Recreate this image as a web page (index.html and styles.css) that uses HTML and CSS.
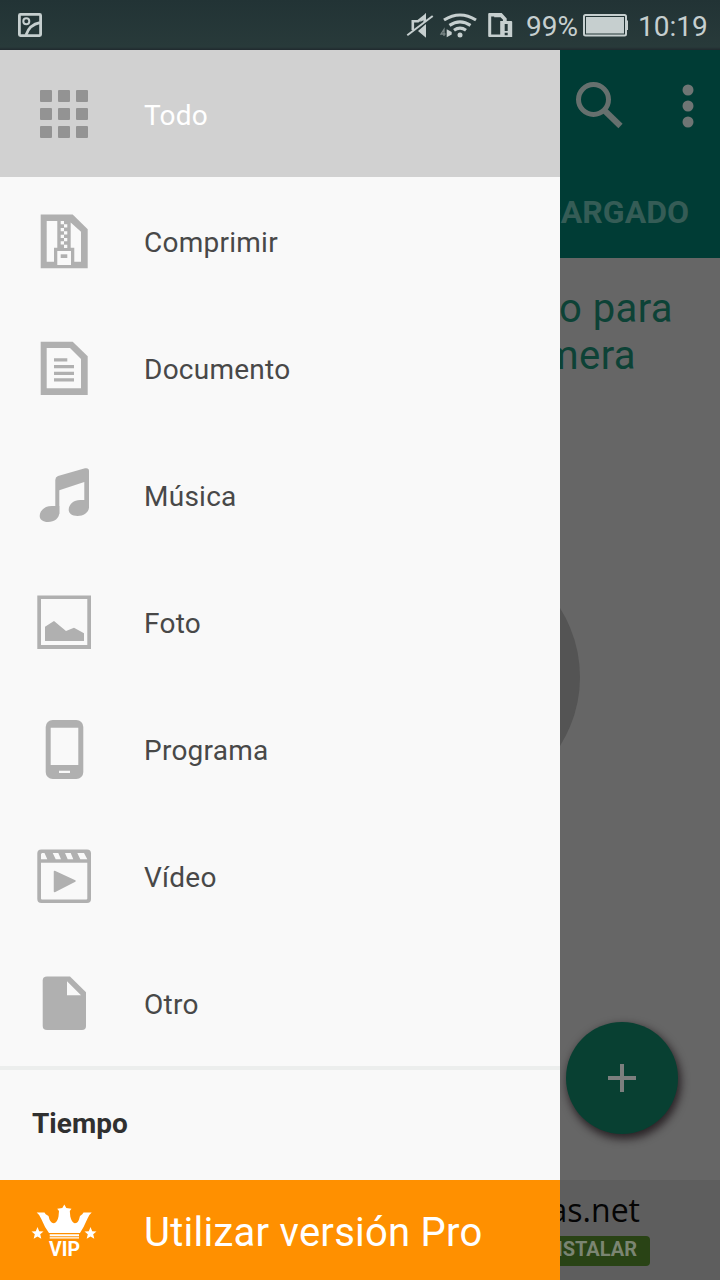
FILE: index.html
```html
<!DOCTYPE html>
<html lang="es">
<head>
<meta charset="utf-8">
<title>Descargas</title>
<link rel="stylesheet" href="styles.css">
</head>
<body>
<header class="status">
  <svg class="status-shot" width="24" height="24" viewBox="0 0 24 24" fill="none" stroke="#c6cfcf">
    <rect x="1.4" y="1.4" width="21.2" height="21.2" rx="1" stroke-width="2.8"/>
    <circle cx="8.3" cy="8.3" r="3" stroke-width="2"/>
    <path d="M8 22C10 16 15 11 22 9.700" stroke-width="2.8"/>
  </svg>
  <svg class="status-icons" width="108" height="32" viewBox="0 0 108 32">
    <g fill="none" stroke="#c6cfcf">
      <path d="M6.800 20V11.300H12L18.700 6V12" stroke-width="2.600"/>
      <path d="M1.300 25.300L26.700 6" stroke-width="2"/>
      <path d="M38 10Q54 0 70 10M43.500 15.300Q54 8.300 64.500 15.300M48 20.200Q54 16 60 20.200" stroke-width="3.200"/>
      <path d="M38 26V19.500L35 24H39.500" stroke="#7a8686" stroke-width="1.300"/>
    </g>
    <path d="M20 2.700V9L14 12ZM20 14V27.700L12 21ZM40.700 19.300L45.700 22V24.500L40.700 27.300Z" fill="#c6cfcf"/>
    <circle cx="54" cy="25" r="2.500" fill="#c6cfcf"/>
    <g transform="translate(1.200 -2)">
      <path d="M82 5H94.500L99.500 10.500V13H96.500V11L93 8.500H84V26.500H95V29H82Q81 29 81 28V6Q81 5 82 5Z" fill="#c6cfcf"/>
      <path d="M93 13H104Q105 13 105 14V29H93Z" fill="#c6cfcf"/>
      <path d="M87 8H94L97 11V13" fill="none" stroke="#c6cfcf" stroke-width="2.500"/>
      <path d="M97.500 16H100.500V23H97.500ZM97.500 24.800H100.500V27.300H97.500Z" fill="#26383a"/>
    </g>
  </svg>
  <span class="status-text percent">99%</span>
  <svg class="status-battery" width="46" height="24" viewBox="0 0 46 24">
    <rect x="1" y="2" width="42" height="20.500" rx="1.500" fill="none" stroke="#c6cfcf" stroke-width="2"/>
    <rect x="3" y="4" width="38" height="16.500" fill="#c6cfcf"/>
    <path d="M43 7.500H45V17H43Z" fill="#c6cfcf"/>
  </svg>
  <span class="status-text clock">10:19</span>
</header>
<div class="screen">
  <nav class="drawer">
    <a class="row selected">
      <svg class="icon" viewBox="0 0 64 64">
        <g stroke="#939393" stroke-width="2" stroke-linejoin="round"><path d="M9 10h10v10h-10zM27 10h10v10h-10zM45 10h10v10h-10zM9 28h10v10h-10zM27 28h10v10h-10zM45 28h10v10h-10zM9 46h10v10h-10zM27 46h10v10h-10zM45 46h10v10h-10z"/></g>
      </svg>
      <span>Todo</span>
    </a>
    <a class="row">
      <svg class="icon" viewBox="0 0 64 64">
        <path d="M8.700 6.500H40.700L55.700 21.300V60.300H8.700Z"/>
        <path class="cut" d="M14.700 13H25.300V39.700H22V53.700H14.700ZM38.700 14.500L49 23.700V53.700H42.300V39.700H38.700ZM25.300 43H39V57H25.300Z"/>
        <path class="cut" d="M28.700 13h3.300v3.300h-3.300zM32 16.300h3.300v3.300h-3.300zM28.700 20h3.300v3.300h-3.300zM32 23.300h3.300v3.300h-3.300zM28.700 26.700h3.300v3.300h-3.300zM32 30h3.300v3.300h-3.300zM28.700 33.300h3.300v3.300h-3.300zM32 36.700h3.300v3.300h-3.300z"/>
        <path d="M28.700 46.300H35.300V50H28.700Z"/>
      </svg>
      <span>Comprimir</span>
    </a>
    <a class="row">
      <svg class="icon" viewBox="0 0 64 64">
        <path d="M8.700 6.700H40.700L55.700 21.300V60H8.700Z"/>
        <path class="cut" d="M14.700 13H38L49 24V53.300H14.700Z"/>
        <path d="M22 23.300h13.300v3.300h-13.300zM22 30h20v3.300h-20zM22 36.700h20v3.300h-20zM22 43.300h20v3.300h-20z"/>
      </svg>
      <span>Documento</span>
    </a>
    <a class="row">
      <svg class="icon" viewBox="0 0 64 64">
        <path d="M23.300 44V18Q23.300 15 26 14L53 6.300Q57 5.500 57 9V46H52.300V20L27.300 28.300V52H23.300Z"/>
        <path d="M27.300 44V51C27.300 56 22.500 60 16 60C11 60 7.700 57.500 7.700 54C7.700 49 12 44 20 44ZM57 38V45C57 50 52 54 45.500 54C40 54 36.700 51 36.700 48C36.700 42 42 38 48 38Z"/>
      </svg>
      <span>Música</span>
    </a>
    <a class="row">
      <svg class="icon" viewBox="0 0 64 64">
        <path d="M5.300 6.500H59V60H5.300ZM9 10V56H55.300V10Z" fill-rule="evenodd"/>
        <path d="M13 37.700L22 32L34 42L42 38.700L52 44.300V52H13Z"/>
      </svg>
      <span>Foto</span>
    </a>
    <a class="row">
      <svg class="icon" viewBox="0 0 64 64">
        <rect x="13.700" y="4" width="37.600" height="59" rx="7"/>
        <path class="cut" d="M18.700 11.700H46.300V49H18.700ZM27 54.700H38V57H27Z"/>
      </svg>
      <span>Programa</span>
    </a>
    <a class="row">
      <svg class="icon" viewBox="0 0 64 64">
        <rect x="5.300" y="6.500" width="53.700" height="53.500" rx="4"/>
        <path class="cut" d="M9 19.700H55.300V55.500Q55.300 56.500 54.300 56.500H10Q9 56.500 9 55.500ZM9 16.300V11L10 10H12.500L15.300 16.300ZM20.700 10H26.300L29 16.300H23.700ZM33 10H38.700L41.300 16.300H35.700ZM45.300 10H52L55.300 16.300H48.300Z"/>
        <path d="M22.500 28.500L43 38L22.500 48.500Z" stroke="#b0b0b0" stroke-width="1.500" stroke-linejoin="round"/>
      </svg>
      <span>Vídeo</span>
    </a>
    <a class="row">
      <svg class="icon" viewBox="0 0 64 64">
        <path d="M15 6.500H38L54 22.300V56Q54 60 50 60H15Q10.700 60 10.700 56V10.500Q10.700 6.500 15 6.500Z"/>
        <path class="cut" d="M35 11.300L49 25.300H35Z"/>
      </svg>
      <span>Otro</span>
    </a>
    <h2 class="section">Tiempo</h2>
    <a class="pro">
      <svg class="vip" width="64" height="64" viewBox="0 0 64 64">
        <path d="M32.300 6.500L34.300 10L39.500 10.700L37.800 13L38.300 18.500Q39.500 24 42.700 25.300Q46 25 47 21.500L48 18L50.300 16.300L51.500 14.500L59.700 14.500Q56.500 17 55.300 21Q52 29 48 35H17Q12.500 29 9.300 21Q8 17 4.700 14.500L12.500 14.500L13.700 16.300L16.500 18L17.500 21.500Q19 25 22 25.300Q25.500 24 26.500 18.500L27 13L25.200 10.700L30.300 10Z"/>
        <path d="M17.700 36.300h29.300v2h-29.300zM17.700 39.300h29.300v1.300h-29.300z"/>
        <path id="star" d="M5.500 29L7.200 33.200L11.500 33.500L8.200 36.300L9.300 40.700L5.500 38.400L1.700 40.700L2.800 36.300L-.5 33.500L3.800 33.200Z"/>
        <use href="#star" x="53"/>
        <text x="17" y="57.700" textLength="31" lengthAdjust="spacingAndGlyphs">VIP</text>
      </svg>
      <span>Utilizar versión Pro</span>
    </a>
  </nav>
  <main class="behind">
    <div class="appbar">
      <svg class="tools" width="160" height="112" viewBox="0 0 160 112">
        <circle cx="33.500" cy="49.500" r="15" fill="none" stroke="#66706e" stroke-width="5"/>
        <path d="M44.500 60.500L60.500 76" stroke="#66706e" stroke-width="6"/>
        <g fill="#6f7574"><circle cx="128" cy="40" r="5.500"/><circle cx="128" cy="56" r="5.500"/><circle cx="128" cy="72" r="5.500"/></g>
      </svg>
      <div class="tab">CARGADO</div>
    </div>
    <div class="content">
      <div class="hint"><span>o para</span><span class="second">mera</span></div>
      <div class="disc"></div>
      <button class="fab"><svg width="28" height="28" viewBox="0 0 28 28"><path d="M14 0V28M0 14H28" stroke="#7c7f7e" stroke-width="4"/></svg></button>
    </div>
    <div class="ad">
      <span class="ad-title">as.net</span>
      <span class="ad-button">INSTALAR</span>
    </div>
  </main>
</div>
</body>
</html>
```
FILE: styles.css
```css
* { box-sizing: border-box; }
body {
  margin: 0;
  width: 720px;
  height: 1280px;
  overflow: hidden;
  font-family: Roboto, "Noto Sans", sans-serif;
}
.status {
  display: flex;
  align-items: center;
  height: 50px;
  padding: 0 12px 0 18px;
  background: linear-gradient(#223335, #283a3a 94%, #20292e);
}
.status-icons { margin-left: auto; margin-top: 2px; }
.status-text { font-size: 28px; line-height: 50px; color: #c6cfcf; white-space: nowrap; padding-top: 3px; }
.percent { width: 52px; margin-left: 12px; }
.status-battery { margin-left: 5px; }
.clock { width: 70px; margin-left: 9px; }
.screen { display: grid; grid-template-columns: 560px 160px; height: 1230px; }
.drawer { display: flex; flex-direction: column; background: #f9f9f9; }
.row {
  display: flex;
  align-items: center;
  gap: 48px;
  height: 127px;
  padding-left: 32px;
  font-size: 28px;
  color: #484848;
}
.row span { padding-top: 3px; letter-spacing: 0.25px; }
.icon { width: 64px; height: 64px; margin-bottom: 1px; fill: #b0b0b0; }
.icon .cut { fill: #f9f9f9; }
.selected { background: #d1d1d1; color: #fff; }
.selected .icon { fill: #939393; }
.section {
  height: 114px;
  margin: 0;
  padding-left: 32px;
  border-top: 4px solid #eceeed;
  font-size: 28px;
  line-height: 108px;
  color: #303030;
}
.pro {
  display: flex;
  align-items: center;
  gap: 48px;
  height: 100px;
  padding-left: 32px;
  background: #ff9000;
  color: #fff;
  font-size: 40px;
}
.pro span { padding-top: 4px; letter-spacing: 0.25px; }
.vip { fill: #fff; overflow: visible; }
.vip text { font-size: 21px; font-weight: 700; }
.behind { display: flex; flex-direction: column; overflow: hidden; background: #666; }
.appbar { height: 208px; background: #003c35; }
.tools { display: block; }
.tab {
  display: flex;
  justify-content: flex-end;
  padding-right: 31px;
  font-size: 32px;
  font-weight: 700;
  line-height: 100px;
  color: #355c56;
}
.content { position: relative; height: 922px; padding-top: 27px; }
.hint {
  display: flex;
  flex-direction: column;
  align-items: flex-end;
  padding-right: 47px;
  font-size: 40px;
  letter-spacing: 0.4px;
  line-height: 47px;
  white-space: nowrap;
  color: #0d4236;
}
.second { padding-right: 37px; }
.disc { width: 258px; height: 258px; margin: 169px 0 0 -238px; border-radius: 50%; background: #545454; }
.fab {
  position: absolute;
  left: 6px;
  bottom: 46px;
  display: grid;
  place-items: center;
  width: 112px;
  height: 112px;
  padding: 0;
  border: 0;
  border-radius: 50%;
  background: #084032;
  box-shadow: 2px 4px 8px 1px rgba(20, 12, 16, 0.75);
}
.ad {
  display: flex;
  flex-direction: column;
  align-items: flex-end;
  height: 100px;
  background: #5e5e5e;
}
.ad-title { padding-right: 80px; font: 32px/56px "Open Sans", "Noto Sans", sans-serif; padding-top: 2px; height: 56px; color: #050505; }
.ad-button {
  height: 30px;
  padding: 0 13px;
  margin-right: 70px;
  border-radius: 4px;
  background: #294315;
  font-size: 20px;
  font-weight: 700;
  line-height: 27px;
  color: #7b8572;
}
```
